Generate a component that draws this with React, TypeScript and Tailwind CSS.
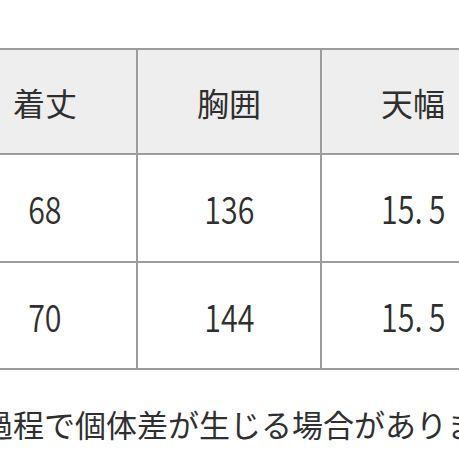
import React from "react";

const jp = { fontFamily: "'Noto Sans CJK JP', 'Noto Sans', sans-serif" };

function Num({ children }: { children: React.ReactNode }) {
  return (
    <span className="inline-block origin-center scale-x-[0.8] text-[38px] font-[350] leading-none" style={jp}>
      {children}
    </span>
  );
}

export default function App() {
  const headers = ["着丈", "胸囲", "天幅"];
  const rows = [
    ["68", "136", "15.\u20095"],
    ["70", "144", "15.\u20095"],
  ];
  return (
    <div className="relative h-[459px] w-[459px] overflow-hidden bg-white text-[#2f2f2f]" style={jp}>
      <div className="ml-[-48px] mt-[48px] grid w-[554px] grid-cols-[182px_182px_182px] grid-rows-[103px_106px_105px] gap-[2px] bg-[#9c9c9c] p-[2px]">
        {headers.map((h) => (
          <div key={h} className="flex items-center justify-center bg-[#eeeeee] text-[32px] leading-none">
            {h}
          </div>
        ))}
        {rows.flat().map((v, i) => (
          <div key={i} className="flex items-center justify-center bg-white">
            <Num>{v}</Num>
          </div>
        ))}
      </div>
      <div className="ml-[-18px] mt-[38px] whitespace-nowrap text-[31px] leading-[31px]">
        過程で個体差が生じる場合がありま
      </div>
    </div>
  );
}
